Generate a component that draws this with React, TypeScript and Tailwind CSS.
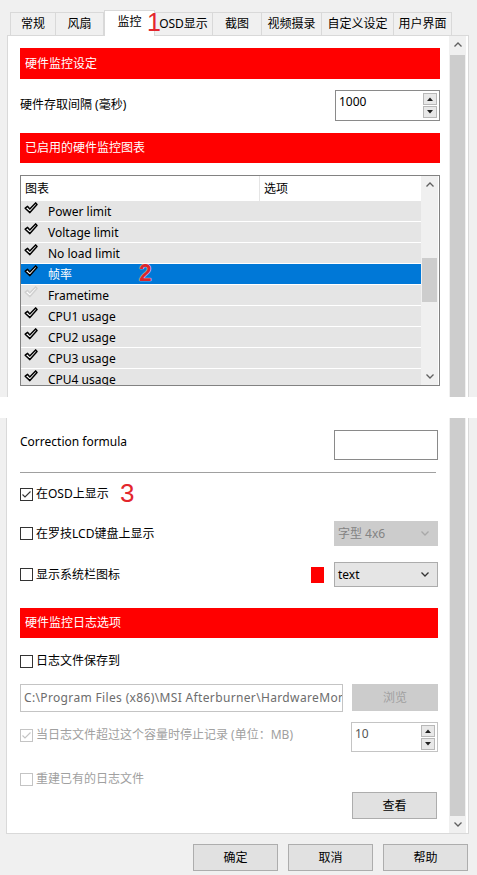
import React from "react";

const ListCheck = ({ light }: { light?: boolean }) => (
  <svg width="14" height="12" viewBox="0 0 14 12">
    <path
      d="M1.2 6.2 L3.6 4.4 L5.8 7 L11.6 0.9 L13 2.6 L5.9 10.6 Z"
      fill="white"
      stroke={light ? "#cfcfcf" : "#000"}
      strokeWidth="1.5"
      strokeLinejoin="round"
    />
  </svg>
);

const Chevron = ({ up, color = "#606060" }: { up?: boolean; color?: string }) => (
  <svg width="8" height="5" viewBox="0 0 8 5">
    <polyline
      points={up ? "0.5,4.5 4,1 7.5,4.5" : "0.5,0.5 4,4 7.5,0.5"}
      fill="none"
      stroke={color}
      strokeWidth="1.3"
    />
  </svg>
);

const Checkbox = ({ checked, disabled }: { checked?: boolean; disabled?: boolean }) => (
  <div
    className={
      "w-[13px] h-[13px] border bg-white flex items-center justify-center shrink-0 " +
      (disabled ? "border-[#c4c4c4]" : "border-[#333333]")
    }
  >
    {checked && (
      <svg width="11" height="11" viewBox="0 0 11 11">
        <polyline
          points="1.5,5.5 4,8 9.5,2.5"
          fill="none"
          stroke={disabled ? "#c4c4c4" : "#333"}
          strokeWidth="1.1"
        />
      </svg>
    )}
  </div>
);

const SpinBtns = () => (
  <div className="flex flex-col gap-px mr-[2px] mt-[2px]">
    <div className="w-[14px] h-[12px] bg-[#e8e8e8] border border-[#b8b8b8] flex items-center justify-center">
      <svg width="6" height="4" viewBox="0 0 6 4">
        <polygon points="0,4 3,0.5 6,4" fill="#222" />
      </svg>
    </div>
    <div className="w-[14px] h-[12px] bg-[#e8e8e8] border border-[#b8b8b8] flex items-center justify-center">
      <svg width="6" height="4" viewBox="0 0 6 4">
        <polygon points="0,0 3,3.5 6,0" fill="#222" />
      </svg>
    </div>
  </div>
);

const RedBar = ({ text, h }: { text: string; h: string }) => (
  <div className={"bg-[#ff0000] text-white text-[12px] leading-[16px] flex items-center pl-[5px] " + h}>
    {text}
  </div>
);

const rows = [
  { t: "Power limit", c: 1 },
  { t: "Voltage limit", c: 1 },
  { t: "No load limit", c: 1 },
  { t: "帧率", c: 1, sel: true },
  { t: "Frametime", c: 0 },
  { t: "CPU1 usage", c: 1 },
  { t: "CPU2 usage", c: 1 },
  { t: "CPU3 usage", c: 1 },
  { t: "CPU4 usage", c: 1 },
];

const tabs = [
  { t: "常规", w: "w-[46px]" },
  { t: "风扇", w: "w-[48px]" },
  { t: "监控", w: "w-[51px]", sel: true },
  { t: "OSD显示", w: "w-[58px]" },
  { t: "截图", w: "w-[49px]" },
  { t: "视频摄录", w: "w-[60px]" },
  { t: "自定义设定", w: "w-[72px]" },
  { t: "用户界面", w: "w-[58px]" },
];

export default function App() {
  return (
    <div className="w-[477px] h-[875px] bg-white overflow-hidden text-black font-[family-name:'Noto_Sans','Noto_Sans_CJK_SC',sans-serif]">
      {/* TOP SCREENSHOT */}
      <div className="h-[397px] bg-[#f0f0f0] overflow-hidden relative">
        <div className="h-[35px] flex items-end pl-[10px] relative">
          {tabs.map((tb, i) =>
            tb.sel ? (
              <div
                key={i}
                className={
                  "h-[26px] -mb-px bg-white border-x border-t border-[#d9d9d9] relative z-10 flex items-center justify-center text-[12px] leading-[16px] pb-[3px] " +
                  tb.w
                }
              >
                {tb.t}
              </div>
            ) : (
              <div
                key={i}
                className={
                  "h-[23px] bg-[#f0f0f0] border-t border-r border-[#d9d9d9] flex items-center justify-center text-[12px] leading-[16px] " +
                  (i === 0 ? "border-l " : "") +
                  tb.w
                }
              >
                {tb.t}
              </div>
            )
          )}
          <span className="absolute left-[147px] top-[9px] text-[25px] leading-[26px] text-[#e3262c] font-['Liberation_Sans',sans-serif] z-20">
            1
          </span>
        </div>
        <div className="ml-[7px] w-[462px] h-[362px] border-x border-t border-[#d9d9d9] bg-white flex">
          <div className="w-[441px] pl-[12px] pr-[9px] pt-[12px] flex flex-col">
            <RedBar text="硬件监控设定" h="h-[31px]" />
            <div className="mt-[11px] h-[31px] flex items-center justify-between">
              <span className="text-[12px] leading-[16px] -mt-[1px]">硬件存取间隔 (毫秒)</span>
              <div className="w-[105px] h-[31px] border border-[#8a8a8a] bg-white flex justify-between">
                <span className="text-[12px] leading-[16px] pl-[3px] pt-[3px]">1000</span>
                <SpinBtns />
              </div>
            </div>
            <div className="mt-[12px]">
              <RedBar text="已启用的硬件监控图表" h="h-[30px]" />
            </div>
            <div className="mt-[12px] h-[211px] border border-[#828282] flex overflow-hidden">
              <div className="w-[400px] flex flex-col overflow-hidden">
                <div className="h-[25px] shrink-0 flex text-[12px] leading-[16px] bg-white">
                  <div className="w-[239px] border-r border-[#e5e5e5] pl-[4px] flex items-center">图表</div>
                  <div className="pl-[4px] flex items-center">选项</div>
                </div>
                {rows.map((r, i) => (
                  <div
                    key={i}
                    className={
                      "h-[21px] shrink-0 border-b border-white flex relative " +
                      (r.sel ? "bg-[#0078d7] text-white" : "bg-[#e5e5e5]")
                    }
                  >
                    <div className="pl-[3px] pt-[1px] w-[27px]">
                      <ListCheck light={!r.c} />
                    </div>
                    <span className="text-[12px] leading-[16px] pt-[3px]">{r.t}</span>
                    {r.sel && (
                      <span className="absolute left-[118px] top-[-3px] text-[23px] leading-[24px] font-bold text-[#d8262e] [text-shadow:0_0_1px_#fff,0_0_1px_#fff] font-['Liberation_Sans',sans-serif]">
                        2
                      </span>
                    )}
                  </div>
                ))}
              </div>
              <div className="w-[17px] bg-[#f0f0f0] flex flex-col">
                <div className="h-[17px] flex items-center justify-center">
                  <Chevron up />
                </div>
                <div className="flex-1 px-px">
                  <div className="mt-[65px] h-[44px] bg-[#cdcdcd]" />
                </div>
                <div className="h-[17px] flex items-center justify-center">
                  <Chevron />
                </div>
              </div>
            </div>
          </div>
          <div className="w-[17px] bg-[#f0f0f0] flex flex-col">
            <div className="h-[17px] flex items-center justify-center">
              <Chevron up />
            </div>
            <div className="flex-1 mt-[2px] mx-px bg-[#cdcdcd]" />
          </div>
          <div className="w-[2px]" />
        </div>
      </div>

      {/* GAP */}
      <div className="h-[21px] bg-white" />

      {/* BOTTOM SCREENSHOT */}
      <div className="h-[457px] bg-[#f0f0f0] overflow-hidden">
        <div className="ml-[6px] w-[463px] h-[416px] border-x border-b border-[#d9d9d9] bg-white flex">
          <div className="w-[442px] pl-[13px] pr-[11px] flex flex-col text-[12px] leading-[16px]">
            <div className="mt-[12px] h-[30px] flex justify-between">
              <span className="pt-[4px]">Correction formula</span>
              <div className="w-[104px] h-[30px] border border-[#8a8a8a] bg-white" />
            </div>
            <div className="mt-[12px] h-px w-[416px] bg-[#a0a0a0]" />
            <div className="mt-[11px] h-[20px] flex items-center relative">
              <Checkbox checked />
              <span className="ml-[3px]">在OSD上显示</span>
              <span className="absolute left-[100px] top-[-4px] text-[26px] leading-[26px] text-[#e3262c] font-['Liberation_Sans',sans-serif]">
                3
              </span>
            </div>
            <div className="mt-[17px] h-[25px] flex items-center justify-between">
              <div className="flex items-center">
                <Checkbox />
                <span className="ml-[3px]">在罗技LCD键盘上显示</span>
              </div>
              <div className="w-[104px] h-[25px] bg-[#cccccc] border border-[#cccccc] flex items-center justify-between pl-[3px] pr-[8px] text-[#838383]">
                <span>字型 4x6</span>
                <Chevron color="#a8a8a8" />
              </div>
            </div>
            <div className="mt-[16px] h-[25px] flex items-center justify-between">
              <div className="flex items-center">
                <Checkbox />
                <span className="ml-[3px]">显示系统栏图标</span>
              </div>
              <div className="flex items-center">
                <div className="w-[13px] h-[16px] bg-[#ff0000] mr-[10px]" />
                <div className="w-[104px] h-[25px] bg-[#e5e5e5] border border-[#acacac] flex items-center justify-between pl-[3px] pr-[8px]">
                  <span>text</span>
                  <Chevron color="#333" />
                </div>
              </div>
            </div>
            <div className="mt-[21px]">
              <RedBar text="硬件监控日志选项" h="h-[30px]" />
            </div>
            <div className="mt-[13px] h-[20px] flex items-center">
              <Checkbox />
              <span className="ml-[3px]">日志文件保存到</span>
            </div>
            <div className="mt-[13px] h-[28px] flex justify-between">
              <div className="w-[323px] h-[28px] border border-[#c4c4c4] bg-white text-[#6d6d6d] pl-[3px] flex items-center overflow-hidden whitespace-nowrap tracking-[0.35px]">
                {"C:\\Program Files (x86)\\MSI Afterburner\\HardwareMon"}
              </div>
              <div className="w-[86px] h-[27px] bg-[#cccccc] border border-[#cccccc] text-[#a0a0a0] flex items-center justify-center">
                浏览
              </div>
            </div>
            <div className="mt-[10px] h-[30px] flex justify-between">
              <div className="mt-[3px] h-[20px] flex items-center text-[#a0a0a0]">
                <Checkbox checked disabled />
                <span className="ml-[3px]">当日志文件超过这个容量时停止记录 (单位：MB)</span>
              </div>
              <div className="w-[87px] h-[30px] border border-[#c4c4c4] bg-white flex justify-between">
                <span className="pl-[3px] pt-[3px] text-[#555]">10</span>
                <SpinBtns />
              </div>
            </div>
            <div className="mt-[17px] h-[20px] flex items-center text-[#a0a0a0]">
              <Checkbox disabled />
              <span className="ml-[3px]">重建已有的日志文件</span>
            </div>
            <div className="mt-[3px] flex justify-end pr-px">
              <div className="w-[85px] h-[27px] bg-[#e1e1e1] border border-[#adadad] flex items-center justify-center">
                查看
              </div>
            </div>
          </div>
          <div className="w-[17px] bg-[#f0f0f0] flex flex-col">
            <div className="flex-1 mx-px bg-[#cdcdcd]" />
            <div className="h-[17px] flex items-center justify-center">
              <Chevron />
            </div>
          </div>
          <div className="w-[2px]" />
        </div>
        <div className="mt-[10px] flex justify-end gap-[10px] pr-[9px] text-[12px] leading-[16px]">
          {["确定", "取消", "帮助"].map((b) => (
            <div
              key={b}
              className="w-[85px] h-[27px] bg-[#e1e1e1] border border-[#adadad] flex items-center justify-center"
            >
              {b}
            </div>
          ))}
        </div>
      </div>
    </div>
  );
}
